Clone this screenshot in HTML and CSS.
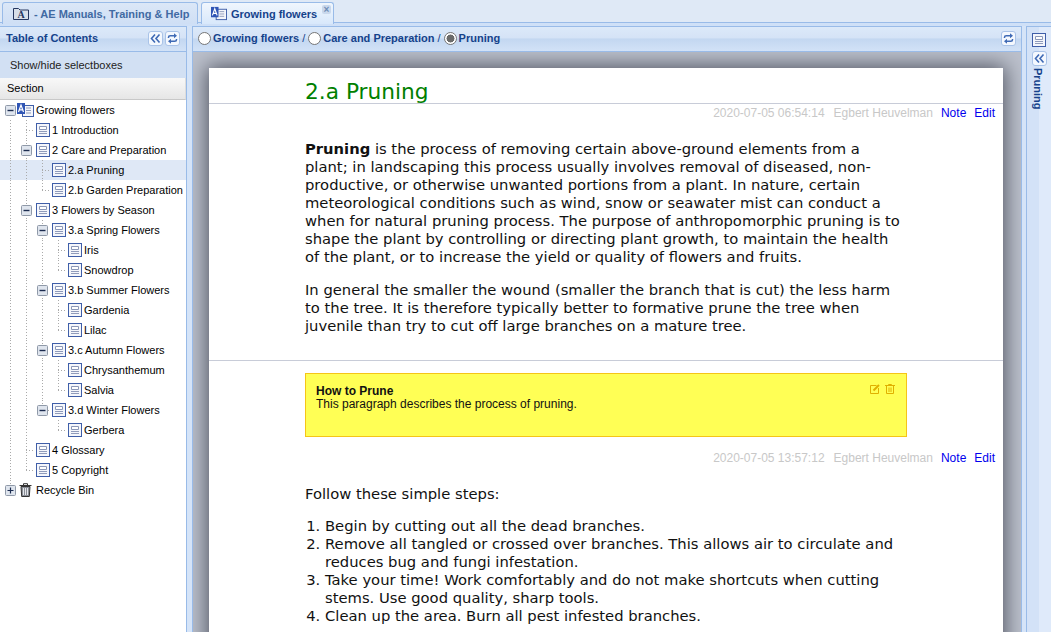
FILE: index.html
```html
<!DOCTYPE html>
<html lang="en">
<head>
<meta charset="utf-8">
<title>Growing flowers</title>
<link rel="stylesheet" href="styles.css">
</head>
<body>
<svg class="defs" width="0" height="0" aria-hidden="true">
  <symbol id="page" viewBox="0 0 14 14">
    <rect x=".5" y=".5" width="13" height="13" fill="#f4f6fb" stroke="#3f5ea8"/>
    <path d="M3.500 3.500h7v3h-7z" fill="#fff" stroke="#8a97b8"/>
    <path d="M3 8.500h8M3 10.500h8" stroke="#8f9bbb"/>
  </symbol>
  <symbol id="book" viewBox="0 0 17 14">
    <rect x="5.500" y="2.500" width="11" height="11" fill="#f4f6fb" stroke="#3f5ea8"/>
    <path d="M9 5h5M9 7.500h5M9 10h5" stroke="#8f9bbb"/>
    <rect x="0" y="0" width="8" height="11" fill="#2f55b5"/>
    <path d="M1.500 9 4 2l2.500 7M2.500 6.800h3" fill="none" stroke="#fff" stroke-width="1.200"/>
  </symbol>
  <symbol id="minus" viewBox="0 0 11 11">
    <rect x=".5" y=".5" width="10" height="10" rx="1" fill="#dfe5ee" stroke="#8f99a8"/>
    <path d="M2.500 5.500h6" stroke="#1c2c50" stroke-width="1.400"/>
  </symbol>
  <symbol id="plus" viewBox="0 0 11 11">
    <rect x=".5" y=".5" width="10" height="10" rx="1" fill="#dfe5ee" stroke="#8f99a8"/>
    <path d="M2.500 5.500h6M5.500 2.500v6" stroke="#1c2c50" stroke-width="1.200"/>
  </symbol>
  <symbol id="collapse" viewBox="0 0 11 11">
    <path d="M5 1.500 1.500 5.500 5 9.500M9.500 1.500 6 5.500 9.500 9.500" fill="none" stroke="#3f6ab5" stroke-width="1.600"/>
  </symbol>
  <symbol id="sync" viewBox="0 0 11 11">
    <path d="M1.500 5V4.300c0-1 .8-1.500 1.800-1.500H7M9.500 6v.7c0 1-.8 1.500-1.800 1.500H4" fill="none" stroke="#3f6ab5" stroke-width="1.500"/>
    <path d="M7 .3 10 2.800 7 5.300zM4 5.700 1 8.200 4 10.700z" fill="#3f6ab5"/>
  </symbol>
</svg>

<header class="tabbar">
  <div class="tab tab-first">
    <svg class="tab-folder" width="16" height="13" viewBox="0 0 16 13"><path d="M.5 12.500V1.500h5l1.500 1.500h8.500v9.500z" fill="#d8dfe9" stroke="#26375f"/><text x="8" y="11" class="tab-letter">A</text></svg>
    <span class="tab-title">- AE Manuals, Training &amp; Help</span>
  </div>
  <div class="tab tab-active">
    <svg class="tab-book" width="16" height="15"><use href="#book"/></svg>
    <span class="tab-title tab-title-active">Growing flowers</span>
    <span class="tab-close">×</span>
  </div>
</header>

<main class="workspace">
  <aside class="toc">
    <div class="panel-head toc-head">
      <span class="panel-title">Table of Contents</span>
      <span class="tool"><svg width="11" height="11"><use href="#collapse"/></svg></span>
      <span class="tool"><svg width="11" height="11"><use href="#sync"/></svg></span>
    </div>
    <div class="toc-bar">Show/hide selectboxes</div>
    <div class="col-head">Section</div>
    <div class="tree">
      <div class="row"><span class="c"><svg class="exp" width="11" height="11"><use href="#minus"/></svg></span><svg class="ico-root" width="17" height="14"><use href="#book"/></svg><span class="lbl">Growing flowers</span></div>
      <div class="row"><span class="c l"></span><span class="c e"></span><svg class="ico" width="14" height="14"><use href="#page"/></svg><span class="lbl">1 Introduction</span></div>
      <div class="row"><span class="c l"></span><span class="c l"><svg class="exp" width="11" height="11"><use href="#minus"/></svg></span><svg class="ico" width="14" height="14"><use href="#page"/></svg><span class="lbl">2 Care and Preparation</span></div>
      <div class="row sel"><span class="c l"></span><span class="c l"></span><span class="c e"></span><svg class="ico" width="14" height="14"><use href="#page"/></svg><span class="lbl">2.a Pruning</span></div>
      <div class="row"><span class="c l"></span><span class="c l"></span><span class="c e end"></span><svg class="ico" width="14" height="14"><use href="#page"/></svg><span class="lbl">2.b Garden Preparation</span></div>
      <div class="row"><span class="c l"></span><span class="c l"><svg class="exp" width="11" height="11"><use href="#minus"/></svg></span><svg class="ico" width="14" height="14"><use href="#page"/></svg><span class="lbl">3 Flowers by Season</span></div>
      <div class="row"><span class="c l"></span><span class="c l"></span><span class="c l"><svg class="exp" width="11" height="11"><use href="#minus"/></svg></span><svg class="ico" width="14" height="14"><use href="#page"/></svg><span class="lbl">3.a Spring Flowers</span></div>
      <div class="row"><span class="c l"></span><span class="c l"></span><span class="c l"></span><span class="c e"></span><svg class="ico" width="14" height="14"><use href="#page"/></svg><span class="lbl">Iris</span></div>
      <div class="row"><span class="c l"></span><span class="c l"></span><span class="c l"></span><span class="c e end"></span><svg class="ico" width="14" height="14"><use href="#page"/></svg><span class="lbl">Snowdrop</span></div>
      <div class="row"><span class="c l"></span><span class="c l"></span><span class="c l"><svg class="exp" width="11" height="11"><use href="#minus"/></svg></span><svg class="ico" width="14" height="14"><use href="#page"/></svg><span class="lbl">3.b Summer Flowers</span></div>
      <div class="row"><span class="c l"></span><span class="c l"></span><span class="c l"></span><span class="c e"></span><svg class="ico" width="14" height="14"><use href="#page"/></svg><span class="lbl">Gardenia</span></div>
      <div class="row"><span class="c l"></span><span class="c l"></span><span class="c l"></span><span class="c e end"></span><svg class="ico" width="14" height="14"><use href="#page"/></svg><span class="lbl">Lilac</span></div>
      <div class="row"><span class="c l"></span><span class="c l"></span><span class="c l"><svg class="exp" width="11" height="11"><use href="#minus"/></svg></span><svg class="ico" width="14" height="14"><use href="#page"/></svg><span class="lbl">3.c Autumn Flowers</span></div>
      <div class="row"><span class="c l"></span><span class="c l"></span><span class="c l"></span><span class="c e"></span><svg class="ico" width="14" height="14"><use href="#page"/></svg><span class="lbl">Chrysanthemum</span></div>
      <div class="row"><span class="c l"></span><span class="c l"></span><span class="c l"></span><span class="c e end"></span><svg class="ico" width="14" height="14"><use href="#page"/></svg><span class="lbl">Salvia</span></div>
      <div class="row"><span class="c l"></span><span class="c l"></span><span class="c e end"><svg class="exp" width="11" height="11"><use href="#minus"/></svg></span><svg class="ico" width="14" height="14"><use href="#page"/></svg><span class="lbl">3.d Winter Flowers</span></div>
      <div class="row"><span class="c l"></span><span class="c l"></span><span class="c"></span><span class="c e end"></span><svg class="ico" width="14" height="14"><use href="#page"/></svg><span class="lbl">Gerbera</span></div>
      <div class="row"><span class="c l"></span><span class="c e"></span><svg class="ico" width="14" height="14"><use href="#page"/></svg><span class="lbl">4 Glossary</span></div>
      <div class="row"><span class="c l"></span><span class="c e end"></span><svg class="ico" width="14" height="14"><use href="#page"/></svg><span class="lbl">5 Copyright</span></div>
      <div class="row"><span class="c end-line"><svg class="exp" width="11" height="11"><use href="#plus"/></svg></span><svg class="ico-bin" width="13" height="14" viewBox="0 0 13 14"><path d="M.5 2.500h12M4.500 2V.7h4V2" fill="none" stroke="#333"/><path d="M2 3.500h9l-.7 10H2.700z" fill="#8b8f98" stroke="#333"/><path d="M4.500 5v7M6.500 5v7M8.500 5v7" stroke="#e4e6ea"/></svg><span class="lbl lbl-bin">Recycle Bin</span></div>
    </div>
  </aside>

  <section class="center">
    <div class="panel-head crumbs">
      <label class="crumb"><span class="radio"></span>Growing flowers</label><span class="sep">/</span>
      <label class="crumb"><span class="radio"></span>Care and Preparation</label><span class="sep">/</span>
      <label class="crumb"><span class="radio radio-on"></span>Pruning</label>
      <span class="tool tool-end"><svg width="11" height="11"><use href="#sync"/></svg></span>
    </div>
    <div class="canvas">
      <article class="sheet">
        <div class="pad"><h1 class="title">2.a Pruning</h1></div>
        <div class="meta"><span class="stamp">2020-07-05 06:54:14</span><span class="stamp">Egbert Heuvelman</span><a class="act">Note</a><a class="act">Edit</a></div>
        <div class="pad body first">
          <p><b>Pruning</b> is the process of removing certain above-ground elements from a plant; in landscaping this process usually involves removal of diseased, non-productive, or otherwise unwanted portions from a plant. In nature, certain meteorological conditions such as wind, snow or seawater mist can conduct a when for natural pruning process. The purpose of anthropomorphic pruning is to shape the plant by controlling or directing plant growth, to maintain the health of the plant, or to increase the yield or quality of flowers and fruits.</p>
          <p>In general the smaller the wound (smaller the branch that is cut) the less harm to the tree. It is therefore typically better to formative prune the tree when juvenile than try to cut off large branches on a mature tree.</p>
        </div>
        <hr class="rule">
        <div class="pad">
          <div class="note">
            <div class="note-tools">
              <svg width="10" height="10" viewBox="0 0 10 10"><path d="M.5 1.500h6M.5 1.500v8h8V4" fill="none" stroke="#e0b000"/><path d="M3.500 6.500 9 1" stroke="#e0b000" stroke-width="2"/></svg>
              <svg width="10" height="10" viewBox="0 0 10 10"><path d="M0 1.500h10M3.500 1V.5h3V1M1.500 2v7.500h7V2M4 3.500v4.500M6 3.500v4.500" fill="none" stroke="#e0b000"/></svg>
            </div>
            <div class="note-title">How to Prune</div>
            <div>This paragraph describes the process of pruning.</div>
          </div>
        </div>
        <div class="meta meta-second"><span class="stamp">2020-07-05 13:57:12</span><span class="stamp">Egbert Heuvelman</span><a class="act">Note</a><a class="act">Edit</a></div>
        <div class="pad body second">
          <p>Follow these simple steps:</p>
          <ol>
            <li>Begin by cutting out all the dead branches.</li>
            <li>Remove all tangled or crossed over branches. This allows air to circulate and reduces bug and fungi infestation.</li>
            <li>Take your time! Work comfortably and do not make shortcuts when cutting stems. Use good quality, sharp tools.</li>
            <li>Clean up the area. Burn all pest infested branches.</li>
          </ol>
        </div>
      </article>
    </div>
  </section>

  <aside class="side">
    <svg class="side-ico" width="14" height="14"><use href="#page"/></svg>
    <span class="tool side-tool"><svg width="11" height="11"><use href="#collapse"/></svg></span>
    <span class="side-title">Pruning</span>
  </aside>
</main>
</body>
</html>
```
FILE: styles.css
```css
* { box-sizing: border-box; }
html, body { margin: 0; height: 632px; overflow: hidden; }
body {
  display: flex;
  flex-direction: column;
  font-family: "Liberation Sans", Arial, sans-serif;
  font-size: 11px;
  color: #000;
  background: #d5e4f8;
}
.defs { display: block; height: 0; }

.tabbar {
  flex: 0 0 26px;
  display: flex;
  align-items: flex-end;
  gap: 3px;
  padding: 2px 0 0 2px;
  background: #dfe9f6;
  border-bottom: 3px solid #cfe0f7;
  box-shadow: inset 0 -1px 0 #99bbe8;
  height: 26px;
}
.tab {
  height: 22px;
  margin-bottom: -1px;
  display: flex;
  align-items: center;
  border: 1px solid #99bbe8;
  border-bottom: 0;
  border-radius: 3px 3px 0 0;
  background: linear-gradient(#dbe7f7, #cfdff5);
  font-weight: bold;
}
.tab-first { width: 196px; padding-left: 10px; }
.tab-active { width: 133px; padding-left: 9px; background: linear-gradient(#f0f6fd, #d8e8fb); position: relative; }
.tab-folder { margin-right: 5px; }
.tab-letter { font: bold 10px "Liberation Serif", serif; text-anchor: middle; fill: #26375f; }
.tab-book { margin-right: 4px; }
.tab-title { color: #416aa3; white-space: nowrap; }
.tab-title-active { color: #15428b; }
.tab-close {
  position: absolute;
  top: 2px;
  right: 2px;
  width: 9px;
  height: 9px;
  background: #c9d8ec;
  border-radius: 2px;
  color: #6f8cb5;
  font-size: 10px;
  line-height: 9px;
  text-align: center;
}

.workspace { flex: 1; display: flex; min-height: 0; }

.toc {
  flex: 0 0 187px;
  display: flex;
  flex-direction: column;
  background: #fff;
  border-right: 1px solid #99bbe8;
}
.panel-head {
  flex: 0 0 26px;
  display: flex;
  align-items: center;
  padding-bottom: 2px;
  background: linear-gradient(#dce9f9 0%, #d5e3f6 45%, #c3d7f1 50%, #d2e2f7 100%);
  border-top: 1px solid #99bbe8;
  border-bottom: 1px solid #99bbe8;
}
.toc-head { padding: 0 6px 2px; gap: 2px; }
.panel-title { flex: 1; font-weight: bold; color: #15428b; white-space: nowrap; }
.tool {
  width: 15px;
  height: 15px;
  display: flex;
  align-items: center;
  justify-content: center;
  background: #f4f8fe;
  border: 1px solid #a9c3e8;
  border-radius: 3px;
}
.toc-bar {
  flex: 0 0 26px;
  display: flex;
  align-items: center;
  padding-left: 10px;
  color: #222;
  background: #d2e0f3;
}
.col-head {
  flex: 0 0 22px;
  display: flex;
  align-items: center;
  padding: 0 0 2px 7px;
  font-size: 11px;
  background: linear-gradient(#f8f8f8, #e6e6e6);
  border-bottom: 1px solid #c8c8c8;
  border-right: 1px solid #ddd;
}
.tree { flex: 1; }
.row {
  height: 20px;
  display: flex;
  align-items: center;
  padding-left: 2px;
  white-space: nowrap;
}
.row.sel { background: #dfe8f6; }
.c {
  flex: 0 0 16px;
  height: 20px;
  display: flex;
  align-items: center;
  justify-content: center;
  background-repeat: no-repeat;
}
.c.l { background-image: repeating-linear-gradient(#aaa 0 1px, transparent 1px 3px); background-size: 1px 20px; background-position: 8px 0; }
.c.e, .c.end-line {
  background-image:
    repeating-linear-gradient(#aaa 0 1px, transparent 1px 3px),
    repeating-linear-gradient(90deg, #aaa 0 1px, transparent 1px 3px);
  background-size: 1px 20px, 8px 1px;
  background-position: 8px 0, 8px 10px;
}
.c.e.end, .c.end-line { background-size: 1px 10px, 8px 1px; }
.c.end-line { background-size: 1px 6px, 0 0; }
.exp { background: #fff; }
.ico { flex: none; margin-left: 2px; }
.ico-root { flex: none; margin-left: -1px; }
.ico-bin { flex: none; margin-left: 1px; }
.lbl { margin-left: 2px; }
.lbl-bin { margin-left: 4px; }

.center {
  flex: 1;
  min-width: 0;
  display: flex;
  flex-direction: column;
  margin-left: 5px;
  border-left: 1px solid #99bbe8;
  border-right: 1px solid #99bbe8;
}
.crumbs { padding: 0 5px 2px; color: #15428b; font-weight: bold; }
.crumb { display: flex; align-items: center; white-space: nowrap; }
.sep { margin: 0 3px; font-weight: normal; }
.radio {
  width: 13px;
  height: 13px;
  margin-right: 2px;
  border-radius: 50%;
  border: 1px solid #767676;
  background: #fff;
}
.radio-on { background: radial-gradient(circle, #6b6b6b 0 3.800px, #fff 4.200px); }
.tool-end { margin-left: auto; margin-right: 0; }

.canvas {
  flex: 1;
  min-height: 0;
  overflow: hidden;
  padding: 16px 18px 0 16px;
  background: #bcc1cc;
}
.sheet {
  background: #fff;
  min-height: 700px;
  box-shadow: 0 0 20px 2px #4f5360;
}
.pad { padding: 0 96px; }
.title {
  margin: 0;
  padding-top: 11px;
  height: 35px;
  font: normal 21.7px/25px "DejaVu Sans", sans-serif;
  color: #008000;
}
.meta {
  display: flex;
  justify-content: flex-end;
  gap: 9px;
  padding-right: 8px;
  height: 20px;
  border-top: 1px solid #c8ccd8;
  font-size: 12px;
  line-height: 18px;
}
.meta .act + .act { margin-left: -1px; }
.meta .stamp + .act { margin-left: -1px; }
.meta-second { border-top: 0; margin-top: 12px; height: 19px; }
.stamp { color: #c8c8c8; }
.act { color: #0000ee; }
.body { font: 14.75px/18px "DejaVu Sans", sans-serif; color: #111; }
.body p { margin: 0 0 15px; max-width: 598px; }
.first { padding-top: 17px; }
.second { padding-top: 17px; }
.second p { margin-bottom: 14px; }
.rule { margin: 25px 0 12px; border: 0; height: 1px; background: #c8ccd8; }
.note {
  position: relative;
  height: 64px;
  padding: 11px 10px;
  background: #ffff55;
  border: 1px solid #f5c518;
  font-size: 12px;
  line-height: 13px;
  color: #111;
}
.note-title { font-weight: bold; }
.note-tools { position: absolute; top: 10px; right: 11px; display: flex; gap: 5px; }
ol { margin: 0; padding-left: 20px; }

.side {
  flex: 0 0 25px;
  margin-left: 4px;
  display: flex;
  flex-direction: column;
  align-items: center;
  padding-top: 6px;
  background: linear-gradient(90deg, #d3e2f7 0 52%, #dfeafa 52%);
  border-left: 1px solid #99bbe8;
  border-top: 1px solid #99bbe8;
}
.side-tool { margin-top: 4px; }
.side-title {
  margin: 2px 3px 0 0;
  writing-mode: vertical-rl;
  font-weight: bold;
  color: #15428b;
  font-size: 11px;
}
```
